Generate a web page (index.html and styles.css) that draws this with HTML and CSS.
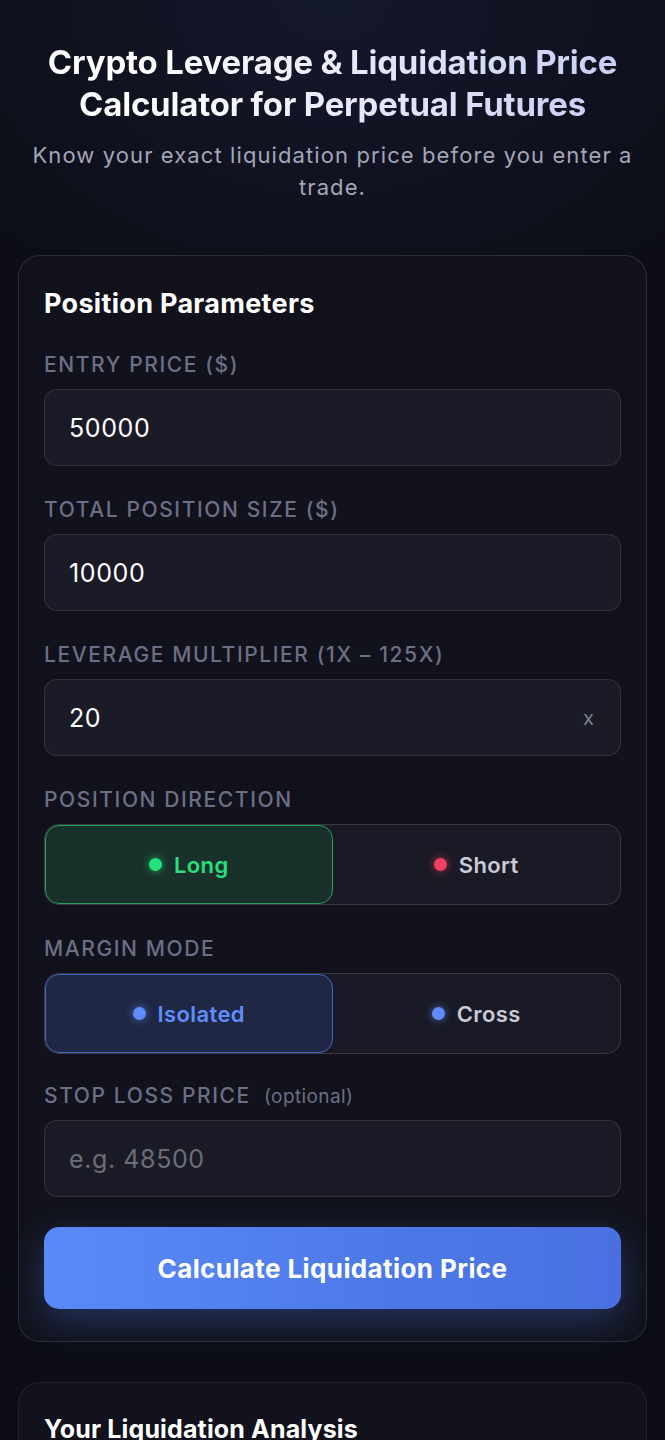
FILE: index.html
```html
<!DOCTYPE html>
<html>

<head>
	<title>Crypto Leverage &amp; Liquidation Price Calculator</title>
	<meta charset="UTF-8">
	<link rel="stylesheet" href="styles.css">
	<meta name="viewport" content="width=device-width, initial-scale=1">
</head>

<body>
	<header class="hero">
		<h1 class="hero-title">Crypto Leverage &amp; Liquidation Price Calculator for Perpetual Futures</h1>
		<p class="hero-sub">Know your exact liquidation price before you enter a trade.</p>
	</header>

	<section class="card">
		<h2 class="card-title">Position Parameters</h2>

		<div class="field">
			<label class="field-label" for="entry">Entry Price ($)</label>
			<div class="input-box"><input id="entry" type="text" value="50000"></div>
		</div>

		<div class="field">
			<label class="field-label" for="size">Total Position Size ($)</label>
			<div class="input-box"><input id="size" type="text" value="10000"></div>
		</div>

		<div class="field">
			<label class="field-label" for="lev">Leverage Multiplier (1x – 125x)</label>
			<div class="input-box">
				<input id="lev" type="text" value="20">
				<span class="suffix">x</span>
			</div>
		</div>

		<div class="field">
			<span class="field-label">Position Direction</span>
			<div class="toggle">
				<button class="toggle-btn long active"><span class="dot dot-green"></span>Long</button>
				<button class="toggle-btn"><span class="dot dot-red"></span>Short</button>
			</div>
		</div>

		<div class="field">
			<span class="field-label">Margin Mode</span>
			<div class="toggle">
				<button class="toggle-btn blue active"><span class="dot dot-blue"></span>Isolated</button>
				<button class="toggle-btn"><span class="dot dot-blue"></span>Cross</button>
			</div>
		</div>

		<div class="field field-sl">
			<label class="field-label" for="sl">Stop Loss Price <span class="optional">(optional)</span></label>
			<div class="input-box"><input id="sl" type="text" placeholder="e.g. 48500"></div>
		</div>

		<button class="calc-btn">Calculate Liquidation Price</button>
	</section>

	<section class="card card-results">
		<h2 class="card-title results-title">Your Liquidation Analysis</h2>
	</section>
</body>

</html>
```

FILE: styles.css
```css
html {
	background: #0c0d15;
}

body {
	margin: 0;
	padding: 41px 18px 40px;
	min-height: 1440px;
	box-sizing: border-box;
	font-family: Inter, "Noto Sans", sans-serif;
	color: #e6e7ee;
	background:
		radial-gradient(ellipse 700px 520px at 50% 0, rgba(40, 52, 100, 0.28), transparent 70%),
		#0c0d15;
}

.hero {
	text-align: center;
}

.hero-title {
	margin: 0;
	font-size: 33px;
	line-height: 42px;
	font-weight: 700;
	letter-spacing: -0.2px;
	background: linear-gradient(90deg, #ffffff 20%, #c5cbf5 100%);
	-webkit-background-clip: text;
	background-clip: text;
	color: transparent;
}

.hero-sub {
	margin: 14px 0 0;
	font-size: 22px;
	line-height: 32px;
	letter-spacing: 1.1px;
	color: #a3a6b8;
}

.card {
	margin-top: 52px;
	padding: 31px 25px 32px;
	border: 1px solid rgba(255, 255, 255, 0.12);
	border-radius: 22px;
	background: #11121b;
}

.card-results {
	margin-top: 40px;
	padding-top: 29px;
	border-color: rgba(255, 255, 255, 0.07);
}

.card-title {
	margin: 0 0 32px;
	font-size: 27px;
	line-height: 34px;
	font-weight: 700;
	letter-spacing: 0.3px;
	color: #ffffff;
}

.results-title {
	font-size: 25px;
	letter-spacing: 0.15px;
}

.field {
	margin-bottom: 32px;
}

.field-sl {
	margin-top: -2px;
}

.field-label {
	display: block;
	margin-bottom: 12px;
	font-size: 21px;
	line-height: 24px;
	height: 24px;
	font-weight: 500;
	letter-spacing: 1.6px;
	text-transform: uppercase;
	color: #6c6f86;
}

.optional {
	margin-left: 6px;
	font-size: 19px;
	line-height: 1;
	font-weight: 400;
	letter-spacing: 0.4px;
	text-transform: none;
}

.input-box {
	display: flex;
	align-items: center;
	height: 77px;
	box-sizing: border-box;
	padding: 0 24px;
	border: 1px solid rgba(255, 255, 255, 0.1);
	border-radius: 13px;
	background: #1a1b26;
}

.input-box input {
	flex: 1;
	min-width: 0;
	border: 0;
	outline: 0;
	padding: 0;
	background: transparent;
	font-family: inherit;
	font-size: 25px;
	letter-spacing: 0.6px;
	color: #ffffff;
}

.input-box input::placeholder {
	color: #6c6d78;
}

.suffix {
	font-size: 20px;
	color: #7e8092;
	margin-right: 2px;
}

.toggle {
	display: grid;
	grid-template-columns: 1fr 1fr;
	height: 81px;
	box-sizing: border-box;
	border: 1px solid rgba(255, 255, 255, 0.14);
	border-radius: 15px;
	background: #191a25;
	overflow: hidden;
}

.toggle-btn {
	display: flex;
	align-items: center;
	justify-content: center;
	gap: 12px;
	border: 1px solid transparent;
	border-radius: 14px;
	background: transparent;
	font-family: inherit;
	font-size: 22px;
	font-weight: 600;
	letter-spacing: 0.4px;
	color: #c9cbd6;
	cursor: pointer;
}

.toggle-btn.long.active {
	background: #19302b;
	border-color: #22a35e;
	color: #27e07d;
}

.toggle-btn.blue.active {
	background: #1f2744;
	border-color: #4465c4;
	color: #5f8efc;
}

.dot {
	width: 13px;
	height: 13px;
	border-radius: 50%;
}

.dot-green {
	background: #22e27a;
	box-shadow: 0 0 8px rgba(34, 226, 122, 0.7);
}

.dot-red {
	background: #f43f5e;
	box-shadow: 0 0 8px rgba(244, 63, 94, 0.7);
}

.dot-blue {
	background: #5e8cfb;
	box-shadow: 0 0 8px rgba(94, 140, 251, 0.7);
}

.calc-btn {
	display: block;
	width: 100%;
	height: 82px;
	margin-top: -2px;
	border: 0;
	border-radius: 15px;
	background: linear-gradient(90deg, #5a8af8 0%, #4d79e8 60%, #4870e0 100%);
	box-shadow: 0 12px 36px rgba(74, 114, 224, 0.35);
	font-family: inherit;
	font-size: 26px;
	font-weight: 700;
	letter-spacing: 0.4px;
	color: #ffffff;
	cursor: pointer;
}
```
